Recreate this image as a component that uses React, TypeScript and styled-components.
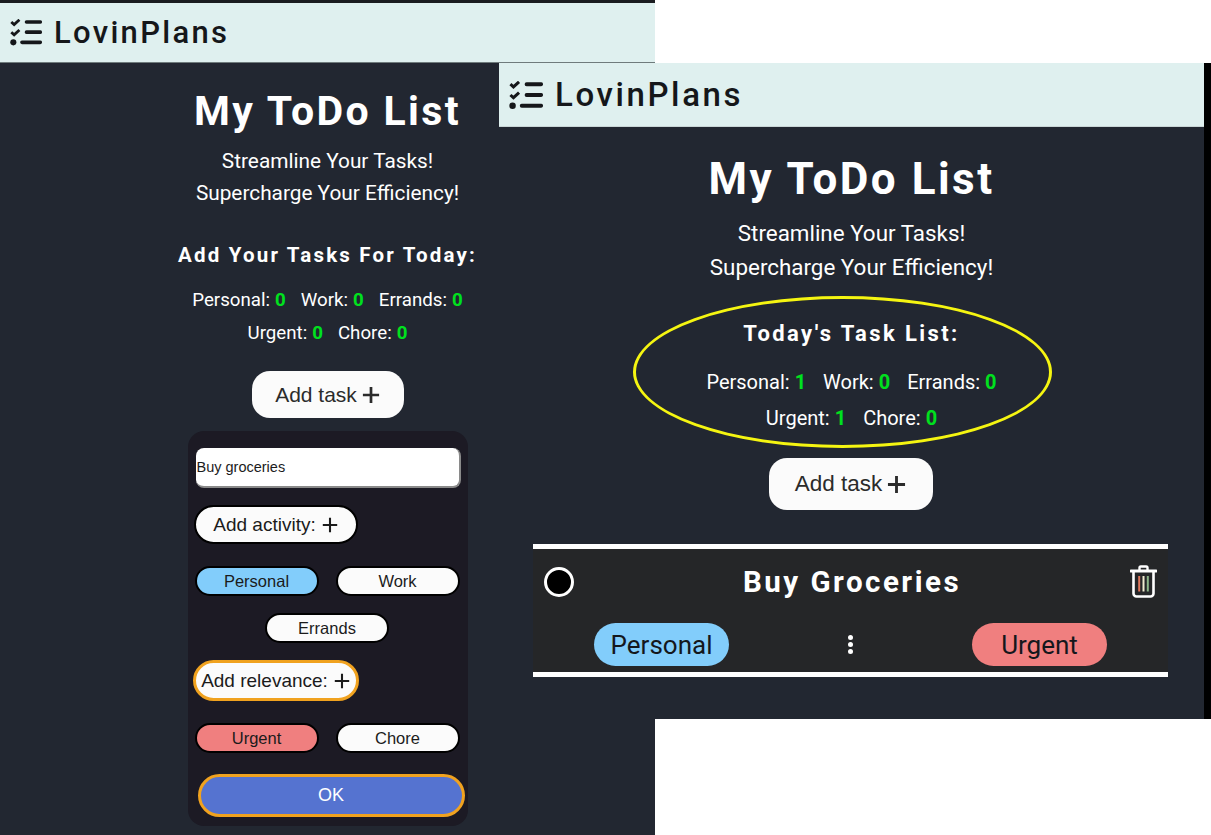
import React from "react";
import styled, { createGlobalStyle } from "styled-components";

const GlobalStyle = createGlobalStyle`
  html, body {
    margin: 0;
    padding: 0;
    background: #ffffff;
    overflow: hidden;
  }
  * {
    box-sizing: border-box;
  }
`;

const Desktop = styled.div`
  position: relative;
  width: 1211px;
  height: 835px;
  background: #ffffff;
  overflow: hidden;
  font-family: Roboto, "Liberation Sans", sans-serif;
`;

const LeftShot = styled.section`
  position: absolute;
  left: 0;
  top: 0;
  width: 655px;
  height: 835px;
  background: #222731;
  border-top: 3px solid #1a1c20;
  display: flex;
  flex-direction: column;
  align-items: center;
`;

const RightShot = styled.section`
  position: absolute;
  left: 499px;
  top: 63px;
  width: 712px;
  height: 656px;
  background: #222731;
  border-right: 7px solid #000000;
  display: flex;
  flex-direction: column;
  align-items: center;
`;

const Header = styled.header<{ $large?: boolean }>`
  align-self: stretch;
  height: ${(p) => (p.$large ? 64 : 60)}px;
  flex-shrink: 0;
  display: flex;
  align-items: center;
  gap: 12px;
  padding-left: 9px;
  background: #dff0ef;
  border-bottom: 1px solid ${(p) => (p.$large ? "#c9d6d6" : "#6f7b7c")};
`;

const Brand = styled.span<{ $large?: boolean }>`
  font-size: ${(p) => (p.$large ? 33 : 31)}px;
  font-weight: 500;
  letter-spacing: ${(p) => (p.$large ? 2.6 : 2.3)}px;
  color: #15171a;
`;

const Title = styled.h1<{ $large?: boolean }>`
  margin: ${(p) => (p.$large ? 24 : 21)}px 0 0;
  font-size: ${(p) => (p.$large ? 44 : 41)}px;
  line-height: ${(p) => (p.$large ? 56 : 54)}px;
  font-weight: 700;
  letter-spacing: ${(p) => (p.$large ? 2.5 : 2.35)}px;
  color: #ffffff;
`;

const Tagline = styled.p<{ $large?: boolean }>`
  margin: ${(p) => (p.$large ? 9 : 7)}px 0 0;
  font-size: ${(p) => (p.$large ? 22.4 : 20.8)}px;
  line-height: ${(p) => (p.$large ? 34 : 32)}px;
  text-align: center;
  color: #ffffff;
`;

const StatsBlock = styled.div<{ $large?: boolean }>`
  position: relative;
  margin-top: ${(p) => (p.$large ? 35 : 31)}px;
  display: flex;
  flex-direction: column;
  align-items: center;
`;

const Heading = styled.h2<{ $large?: boolean }>`
  margin: 0 0 ${(p) => (p.$large ? 15 : 14)}px;
  font-size: ${(p) => (p.$large ? 22 : 20.5)}px;
  line-height: 30px;
  font-weight: 700;
  letter-spacing: ${(p) => (p.$large ? 2.4 : 2.2)}px;
  color: #ffffff;
`;

const CountRow = styled.div<{ $large?: boolean }>`
  display: flex;
  justify-content: center;
  gap: ${(p) => (p.$large ? 17 : 15)}px;
  font-size: ${(p) => (p.$large ? 20 : 18.7)}px;
  line-height: ${(p) => (p.$large ? 36 : 33)}px;
  color: #ffffff;
`;

const CountValue = styled.b`
  margin-left: 5px;
  color: #00e11e;
  font-weight: 700;
`;

const Highlight = styled.div`
  position: absolute;
  left: 50%;
  top: -23px;
  width: 419px;
  height: 152px;
  margin-left: -218px;
  border: 3px solid #f5f511;
  border-radius: 50%;
  pointer-events: none;
`;

const AddTask = styled.button<{ $large?: boolean }>`
  margin-top: ${(p) => (p.$large ? 22 : 21)}px;
  margin-right: ${(p) => (p.$large ? 2 : 0)}px;
  flex-shrink: 0;
  width: ${(p) => (p.$large ? 164 : 152)}px;
  height: ${(p) => (p.$large ? 52 : 47)}px;
  display: flex;
  align-items: center;
  justify-content: center;
  gap: 5px;
  background: #fbfbfb;
  border: none;
  border-radius: 18px;
  font-family: "Liberation Sans", Arial, sans-serif;
  font-size: ${(p) => (p.$large ? 22.5 : 21)}px;
  color: #2b2b2b;
`;

const Panel = styled.form`
  margin-top: 13px;
  width: 280px;
  height: 395px;
  flex-shrink: 0;
  padding-top: 17px;
  display: flex;
  flex-direction: column;
  background: #1c1a24;
  border-radius: 16px;
`;

const TaskInput = styled.input`
  margin-left: 8px;
  width: 265px;
  height: 40px;
  flex-shrink: 0;
  padding: 0 0 0 1px;
  background: #ffffff;
  border: none;
  border-right: 2px solid #8a8a8a;
  border-bottom: 2px solid #8a8a8a;
  border-radius: 8px;
  font-family: "Liberation Sans", Arial, sans-serif;
  font-size: 14.5px;
  color: #1c1c1c;
  outline: none;
`;

const AddOption = styled.button<{ $active?: boolean }>`
  align-self: flex-start;
  flex-shrink: 0;
  margin-top: 17px;
  margin-left: ${(p) => (p.$active ? 5 : 6)}px;
  width: ${(p) => (p.$active ? 166 : 164)}px;
  height: ${(p) => (p.$active ? 41 : 39)}px;
  padding: 0;
  display: flex;
  align-items: center;
  justify-content: center;
  gap: 6px;
  background: #fbfbfb;
  border: ${(p) => (p.$active ? "3px solid #f0a21f" : "2px solid #000000")};
  border-radius: 21px;
  font-family: "Liberation Sans", Arial, sans-serif;
  font-size: 19px;
  color: #1b1b1b;
`;

const OptionRow = styled.div<{ $top: number }>`
  margin-top: ${(p) => p.$top}px;
  display: flex;
  flex-wrap: wrap;
  justify-content: center;
  gap: 17px;
  padding-right: 1px;
`;

const Option = styled.button<{ $fill?: string }>`
  width: 124px;
  height: 30px;
  padding: 0;
  background: ${(p) => p.$fill ?? "#fbfbfb"};
  border: 2px solid #000000;
  border-radius: 15px;
  font-family: "Liberation Sans", Arial, sans-serif;
  font-size: 16.5px;
  color: #1b1b1b;
`;

const OkButton = styled.button`
  margin: 21px 0 0 10px;
  width: 267px;
  height: 43px;
  background: #5573d0;
  border: 3px solid #f0a21f;
  border-radius: 22px;
  font-family: "Liberation Sans", Arial, sans-serif;
  font-size: 18px;
  color: #ffffff;
`;

const TaskCard = styled.article`
  margin-top: 34px;
  margin-right: 2px;
  width: 635px;
  height: 133px;
  flex-shrink: 0;
  display: flex;
  flex-direction: column;
  background: #252628;
  border-top: 5px solid #ffffff;
  border-bottom: 5px solid #ffffff;
`;

const TaskTop = styled.div`
  height: 65px;
  padding: 0 11px;
  display: flex;
  align-items: center;
  justify-content: space-between;
`;

const DoneToggle = styled.span`
  width: 30px;
  height: 30px;
  background: #000000;
  border: 3px solid #ffffff;
  border-radius: 50%;
`;

const TaskName = styled.h3`
  margin: 0;
  font-size: 29.5px;
  font-weight: 700;
  letter-spacing: 2.5px;
  color: #ffffff;
`;

const TaskBottom = styled.div`
  margin-top: 9px;
  display: flex;
  justify-content: center;
  align-items: center;
  gap: 119px;
`;

const Tag = styled.span<{ $fill: string }>`
  width: 135px;
  height: 43px;
  display: flex;
  align-items: center;
  justify-content: center;
  background: ${(p) => p.$fill};
  border-radius: 22px;
  font-size: 26px;
  color: #14171c;
`;

const Dots = styled.span`
  width: 5px;
  display: flex;
  flex-direction: column;
  align-items: center;
  gap: 2px;
  & > i {
    width: 5px;
    height: 5px;
    background: #ffffff;
    border-radius: 50%;
  }
`;

function ListIcon({ size }: { size: number }) {
  return (
    <svg width={size} height={size * 0.8} viewBox="0 0 32 26" fill="none" stroke="#15171a">
      <path d="M2 3 L4.8 5.5 L10 0.8" strokeWidth="2.8" />
      <path d="M2 13 L4.8 15.5 L10 10.8" strokeWidth="2.8" />
      <circle cx="4" cy="23" r="3" fill="#15171a" stroke="none" />
      <path d="M17 3H30.5M17 13H30.5M12.5 23H30.5" strokeWidth="3.6" strokeLinecap="round" />
    </svg>
  );
}

function PlusIcon({ size, weight }: { size: number; weight: number }) {
  return (
    <svg width={size} height={size} viewBox="0 0 20 20" stroke="currentColor" strokeWidth={weight}>
      <path d="M10 1v18M1 10h18" />
    </svg>
  );
}

function TrashIcon() {
  return (
    <svg width="27" height="33" viewBox="0 0 27 33" fill="none" stroke="#ffffff">
      <path d="M9.5 5V2.8c0-.8.6-1.3 1.3-1.3h5.4c.7 0 1.3.5 1.3 1.3V5" strokeWidth="2.4" />
      <path d="M1 6h25" strokeWidth="3" strokeLinecap="round" />
      <path d="M3.5 7v21.5a3 3 0 0 0 3 3h14a3 3 0 0 0 3-3V7" strokeWidth="2.6" />
      <path d="M9.2 11v15.5" stroke="#e2775c" strokeWidth="2" />
      <path d="M13.5 11v15.5" stroke="#f1ead0" strokeWidth="2" />
      <path d="M17.8 11v15.5" stroke="#8fb78a" strokeWidth="2" />
    </svg>
  );
}

function Counts({ large, personal, urgent }: { large?: boolean; personal: number; urgent: number }) {
  return (
    <>
      <CountRow $large={large}>
        <span>Personal:<CountValue>{personal}</CountValue></span>
        <span>Work:<CountValue>0</CountValue></span>
        <span>Errands:<CountValue>0</CountValue></span>
      </CountRow>
      <CountRow $large={large}>
        <span>Urgent:<CountValue>{urgent}</CountValue></span>
        <span>Chore:<CountValue>0</CountValue></span>
      </CountRow>
    </>
  );
}

export default function App() {
  return (
    <Desktop>
      <GlobalStyle />
      <LeftShot>
        <Header>
          <ListIcon size={33} />
          <Brand>LovinPlans</Brand>
        </Header>
        <Title>My ToDo List</Title>
        <Tagline>
          Streamline Your Tasks!
          <br />
          Supercharge Your Efficiency!
        </Tagline>
        <StatsBlock>
          <Heading>Add Your Tasks For Today:</Heading>
          <Counts personal={0} urgent={0} />
        </StatsBlock>
        <AddTask type="button">
          Add task <PlusIcon size={18} weight={3} />
        </AddTask>
        <Panel>
          <TaskInput defaultValue="Buy groceries" />
          <AddOption type="button">
            Add activity: <PlusIcon size={16} weight={2.6} />
          </AddOption>
          <OptionRow $top={22}>
            <Option type="button" $fill="#82cdfb">Personal</Option>
            <Option type="button">Work</Option>
            <Option type="button">Errands</Option>
          </OptionRow>
          <AddOption type="button" $active>
            Add relevance: <PlusIcon size={16} weight={2.6} />
          </AddOption>
          <OptionRow $top={22}>
            <Option type="button" $fill="#f07f7f">Urgent</Option>
            <Option type="button">Chore</Option>
          </OptionRow>
          <OkButton type="button">OK</OkButton>
        </Panel>
      </LeftShot>
      <RightShot>
        <Header $large>
          <ListIcon size={35} />
          <Brand $large>LovinPlans</Brand>
        </Header>
        <Title $large>My ToDo List</Title>
        <Tagline $large>
          Streamline Your Tasks!
          <br />
          Supercharge Your Efficiency!
        </Tagline>
        <StatsBlock $large>
          <Highlight />
          <Heading $large>Today's Task List:</Heading>
          <Counts large personal={1} urgent={1} />
        </StatsBlock>
        <AddTask type="button" $large>
          Add task <PlusIcon size={19} weight={3} />
        </AddTask>
        <TaskCard>
          <TaskTop>
            <DoneToggle />
            <TaskName>Buy Groceries</TaskName>
            <TrashIcon />
          </TaskTop>
          <TaskBottom>
            <Tag $fill="#82cdfb">Personal</Tag>
            <Dots>
              <i />
              <i />
              <i />
            </Dots>
            <Tag $fill="#f07f7f">Urgent</Tag>
          </TaskBottom>
        </TaskCard>
      </RightShot>
    </Desktop>
  );
}
